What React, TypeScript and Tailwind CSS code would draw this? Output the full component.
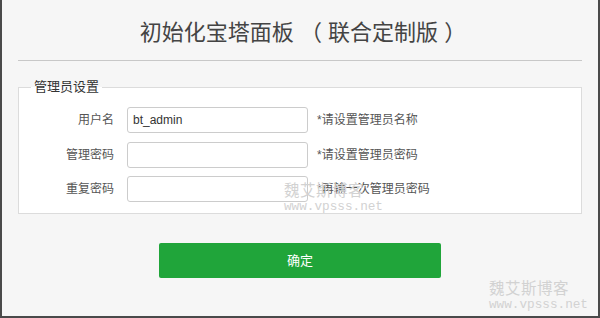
import React from 'react';

const rows = [
  { label: '用户名', value: 'bt_admin', hint: '*请设置管理员名称' },
  { label: '管理密码', value: '', hint: '*请设置管理员密码' },
  { label: '重复密码', value: '', hint: '*再输一次管理员密码' },
];

function Watermark({ className = '' }: { className?: string }) {
  return (
    <div className={`pointer-events-none absolute flex flex-col leading-none text-[#d2d2d2] ${className}`}>
      <span className="text-[15.5px] tracking-[0.5px] font-['Noto_Sans_CJK_SC',serif]">魏艾斯博客</span>
      <span className="mt-[3px] text-[12.7px] font-['Liberation_Mono',monospace]">www.vpsss.net</span>
    </div>
  );
}

export default function App() {
  return (
    <div className="relative w-[600px] h-[318px] overflow-hidden bg-[#f6f6f6] border-l-2 border-r-2 border-b-2 border-[#4a4a4a] font-['Liberation_Sans','Noto_Sans_CJK_SC',sans-serif]">
      <h1 className="pt-[19px] pl-[6px] h-[48px] text-center text-[22px] leading-[28px] text-[#444]">
        初始化宝塔面板 （ 联合定制版 ）
      </h1>
      <div className="mt-[12px] mx-[16px] border-t border-[#c8c8c8]" />

      <fieldset className="mt-[18px] ml-[16px] mr-[16px] border border-[#dcdcdc] bg-white px-0 pt-[12px] pb-[11px]">
        <legend className="ml-[12px] px-[3px] text-[13px] leading-[16px] text-[#333]">管理员设置</legend>
        <div className="flex flex-col gap-[8.5px]">
          {rows.map((r) => (
            <div key={r.label} className="flex items-center">
              <label className="w-[95px] text-right text-[12px] text-[#555]">{r.label}</label>
              <input
                readOnly
                type="text"
                value={r.value}
                className="ml-[13px] w-[181px] h-[26px] rounded-[3px] border border-[#ccc] bg-white px-[5px] text-[12px] text-[#333] outline-none"
              />
              <span className="ml-[9px] text-[12px] text-[#555]">{r.hint}</span>
            </div>
          ))}
        </div>
      </fieldset>

      <div className="mt-[29px] flex justify-center">
        <button className="w-[282px] h-[35px] rounded-[2px] bg-[#20a53a] text-[13px] text-white">确定</button>
      </div>

      <Watermark className="left-[282px] top-[182px]" />
      <Watermark className="left-[487px] top-[280px]" />
    </div>
  );
}
